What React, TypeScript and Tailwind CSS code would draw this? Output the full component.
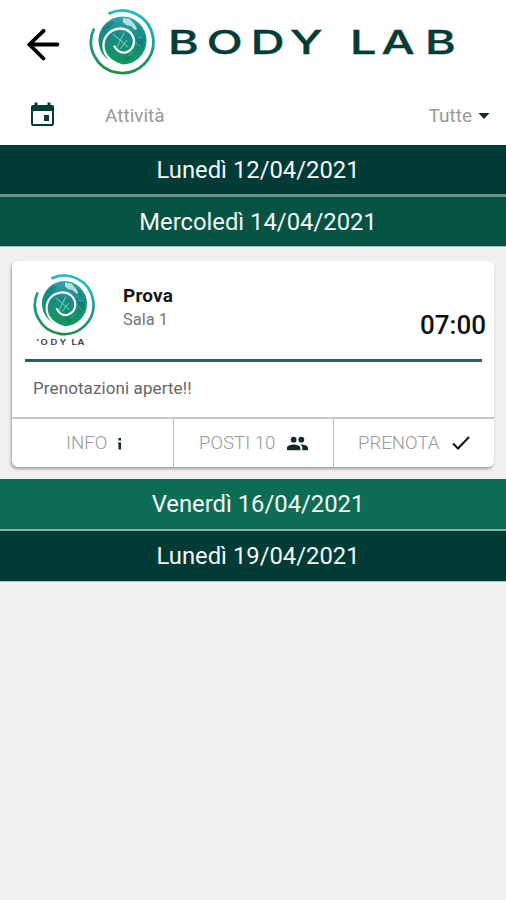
import { useId } from 'react';

interface DayProps {
  label: string;
  className: string;
}

const INK = '#053c37';

// Letter positions of the wordmark, before the horizontal stretch
const WORDMARK_X = '0 27.3 58.2 85.900 128.2 150.4 181';

function Spiral({ className }: { className: string }) {
  const id = useId();
  return (
    <svg viewBox="0 0 66 66" className={className} fill="none">
      <defs>
        <linearGradient id={`${id}r`} x1="40" y1="0" x2="26" y2="66" gradientUnits="userSpaceOnUse">
          <stop offset="0" stopColor="#2bbbcb" />
          <stop offset="0.45" stopColor="#1b9d91" />
          <stop offset="1" stopColor="#278b48" />
        </linearGradient>
        <linearGradient id={`${id}d`} x1="36" y1="6" x2="30" y2="56" gradientUnits="userSpaceOnUse">
          <stop offset="0" stopColor="#35a9b5" />
          <stop offset="0.4" stopColor="#168b86" />
          <stop offset="1" stopColor="#16965a" />
        </linearGradient>
      </defs>
      {/* Globe */}
      <circle cx="33.5" cy="31.5" r="24" fill={`url(#${id}d)`} />
      <path d="M34 9l7 1 5 6 3 4-3 1-4-4-5-1-3-3z" fill="#d8f1ee" opacity=".8" />
      <path d="M13 20l8-8 5 1-7 7zM48 30l7-2-1 9-6 6zM34 47l9 1-5 4zM46 15l5 4 2 6-5-4z" fill="#0a7069" opacity=".4" />
      <path d="M47 34l5 4M40 47l4-4M49 28l5 1" stroke="#9edcd2" strokeWidth=".7" opacity=".6" />
      <path d="M24 25l15 13M28 38l7-14M31 40l7-9" stroke="#9edcc9" strokeWidth=".9" />
      {/* Swirl cut out of the globe */}
      <path
        d="M25.500 37.500c3 5 7 7 11.500 5.800c5-1.500 8.300-6 8-11.300c-.5-7.500-6.500-12.800-14-12.500c-9 .5-16 7-16.500 16c-.3 10 6.500 17.500 17.500 20.500"
        stroke="#fff"
        strokeWidth="2.300"
        strokeLinecap="round"
      />
      {/* Outer ring */}
      <path d="M19.500 4.800A31.200 31.200 0 1 1 5 19.500" stroke={`url(#${id}r)`} strokeWidth="2.800" />
    </svg>
  );
}

function DayBar({ label, className }: DayProps) {
  return (
    <div className={`flex items-center justify-center pt-0.5 pl-[10px] text-[23.8px] text-[#f4f8f7] ${className}`}>
      {label}
    </div>
  );
}

function Header() {
  return (
    <header className="h-[145px] bg-white">
      <div className="flex h-[88px] pl-[27px]">
        <svg width="33" height="33" viewBox="0 0 33 33" className="mt-7" fill="none" stroke="#000" strokeWidth="3.800" strokeLinecap="round">
          <path d="M30.500 16.500H3M16.500 2.800L2.500 16.500L16.500 30.500" />
        </svg>
        <Spiral className="mt-[9px] ml-[29px] size-[66px]" />
        <svg width="300" height="40" className="mt-[22px] ml-[13px]">
          <text
            x={WORDMARK_X}
            y="32.500"
            transform="scale(1.42 1)"
            fill={INK}
            stroke={INK}
            strokeWidth="0.400"
            className="font-['Inter'] text-[33px] font-medium"
          >
            BODYLAB
          </text>
        </svg>
      </div>
      <div className="flex h-14 items-center pr-4 pl-[30px] text-[19px] text-[#999]">
        <svg width="25" height="25" viewBox="0 0 25 25" className="-mt-1">
          <path d="M4.500.5h3v2.500h10V.5h3V3h1.500q2 0 2 2v17q0 2-2 2H3q-2 0-2-2V5q0-2 2-2h1.500zM3 9v13h19V9z" fill={INK} />
          <path d="M14 13h5v6h-5z" fill={INK} />
        </svg>
        <span className="ml-[50px]">Attività</span>
        <span className="ml-auto">Tutte</span>
        <svg width="12" height="6" viewBox="0 0 12 6" className="ml-[6px]">
          <path d="M.5 0h11L6 6z" fill="#102c2a" />
        </svg>
      </div>
    </header>
  );
}

function LessonCard() {
  return (
    <section className="mx-3 mt-3.5 h-[206px] rounded-md bg-white shadow-[-1px_2px_3px_rgba(0,0,0,0.35)]">
      <div className="flex h-[98px] pr-[8px] pl-[21px]">
        <div className="w-[62px] pt-[13px]">
          <Spiral className="size-[62px]" />
          <svg width="62" height="9" className="mt-[2px]">
            <text
              x="2.500 5.600 13 19.600 28.500 33"
              y="7"
              transform="scale(1.35 1)"
              fill="#333"
              className="font-['Inter'] text-[7px] font-semibold"
            >
              'ODYLA
            </text>
          </svg>
        </div>
        <div className="ml-[28px] pt-[22px]">
          <div className="text-[19px] leading-[25px] font-bold tracking-[0.2px] text-[#151515]">Prova</div>
          <div className="text-[16.5px] leading-[23px] text-[#777]">Sala 1</div>
        </div>
        <div className="mt-[48px] ml-auto text-[26px] leading-[32px] font-medium text-[#111]">07:00</div>
      </div>
      <div className="mr-[12px] ml-[13px] h-[3px] bg-[#2b5f57]" />
      <p className="h-[55px] pt-3.5 pl-[21px] text-[17px] leading-6 tracking-[0.1px] text-[#666]">Prenotazioni aperte!!</p>
      <div className="grid h-[50px] grid-cols-[162px_160px_1fr] border-t-2 border-[#c8c8c8] text-[18.6px] font-light text-[#999]">
        <div className="flex items-center border-r border-[#c0c0c0] pt-px pl-[54px]">
          INFO
          <svg width="3" height="12" viewBox="0 0 3 12" className="ml-[11px]" fill="#102c2a">
            <path d="M.5 0h2.500v2.500H.5zM0 4.500h3v7H.5V6H0z" />
          </svg>
        </div>
        <div className="flex items-center border-r border-[#c0c0c0] pt-px pl-[25px]">
          POSTI 10
          <svg width="23" height="23" viewBox="0 0 24 24" className="-mt-px ml-[11px]" fill="#102c2a">
            <circle cx="8" cy="8" r="3" />
            <circle cx="16" cy="8" r="3" />
            <path d="M8 13c-2.330 0-7 1.170-7 3.500V19h14v-2.500C15 14.170 10.330 13 8 13zM16 13c-.29 0-.62.020-.97.050C16.190 13.890 17 15.020 17 16.500V19h6v-2.500C23 14.170 18.330 13 16 13z" />
          </svg>
        </div>
        <div className="flex items-center pt-px pl-6">
          PRENOTA
          <svg width="18" height="14" viewBox="0 0 18 14" className="-mt-0.5 ml-[13px]" fill="none" stroke="#111" strokeWidth="2">
            <path d="M1 7.500l5 5L17 1" />
          </svg>
        </div>
      </div>
    </section>
  );
}

export default function App() {
  return (
    <div className="h-[900px] w-[506px] overflow-hidden bg-[#f0f0f0] font-['Roboto',sans-serif]">
      <Header />
      <DayBar label="Lunedì 12/04/2021" className="h-[52px] border-b-[3px] border-[#6f8f8b] bg-[#003b36]" />
      <DayBar label="Mercoledì 14/04/2021" className="h-[50px] border-b border-[#a9c4bd] bg-[#065344]" />
      <LessonCard />
      <DayBar label="Venerdì 16/04/2021" className="mt-3 h-[52px] border-b-2 border-[#86b5a6] bg-[#0c6c54]" />
      <DayBar label="Lunedì 19/04/2021" className="h-[51px] border-b border-[#a9c4bd] bg-[#003b36]" />
    </div>
  );
}
